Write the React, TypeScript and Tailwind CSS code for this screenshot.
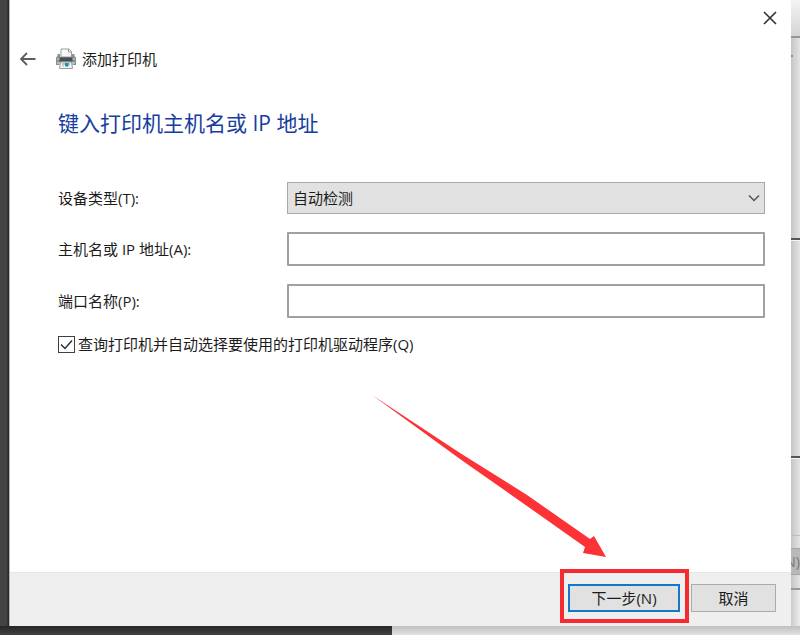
import { useState } from 'react';
import type { ReactNode } from 'react';

function PrinterIcon() {
  return (
    <svg width="22" height="22" viewBox="0 0 22 22" aria-hidden="true">
      <path d="M6 9V1h8l2.500 2.500V9z" fill="#fbfbfb" stroke="#9a9d9d" />
      <path d="M13.500 1v3h3" fill="none" stroke="#9a9d9d" />
      <path d="M2.500 6h2.500v3h12V6h2.500v2L21 9.500v7.500h-3.500v-3h-13v3H1V9.500l1.500-1.500z" fill="#8b8f90" />
      <path d="M2 10h18v2H2z" fill="#aeb2b2" />
      <path d="M4.500 9.500h13v4h-13z" fill="#4a4f51" />
      <path d="M2 14h2v2H2zM18 14h2v2h-2z" fill="#b4b8b8" />
      <path d="M5.500 14h11l1 6.500h-13z" fill="#f1f6f6" stroke="#979b9b" />
      <path d="M7 14.500h8V17H7z" fill="#a9cccf" />
      <path d="M10 15h3.500v3.500H10z" fill="#23919b" />
      <path d="M7 17h2v2H7z" fill="#c9dcdc" />
    </svg>
  );
}

function Field({ id, label, children }: { id: string; label: string; children: ReactNode }) {
  return (
    <div className="flex items-center">
      <label htmlFor={id} className="w-[229px] shrink-0">
        {label}
      </label>
      <div className="relative min-w-0 flex-1">{children}</div>
    </div>
  );
}

function WindowBehind() {
  return (
    <div
      aria-hidden="true"
      className="flex w-[9px] shrink-0 flex-col overflow-hidden bg-linear-to-r from-[#c5c5c5] to-[#e3e3e3]"
    >
      <div className="h-9 bg-linear-to-b from-[#f4f4f4] to-[#d4d4d4]" />
      <div className="h-[2px] bg-[#969696]" />
      <div className="flex h-[200px] pt-[17px]">
        <div className="h-[2px] w-[2px] bg-[#909090]" />
      </div>
      <div className="h-[3px] border-t-2 border-b border-t-[#555555] border-b-[#f4f4f4]" />
      <div className="h-[215px]" />
      <div className="h-[3px] border-t-2 border-b border-t-[#555555] border-b-[#f4f4f4]" />
      <div className="h-[76px]" />
      <div className="h-[13px] border-t border-[#bdbdbd]" />
      <div className="flex h-[27px] items-center justify-end border-y border-[#a5a5a5] bg-[#b9b9b9] text-sm text-[#777777]">
        N)
      </div>
      <div className="h-[13px]" />
      <div className="h-[2px] bg-[#999999]" />
      <div className="flex-1 bg-linear-to-r from-[#cccccc] to-[#ededed]" />
    </div>
  );
}

export default function App() {
  const [query, setQuery] = useState(true);
  const inputClass =
    'block h-[34px] w-full rounded-[1px] border-2 border-[#a0a0a0] bg-white px-1 outline-none';

  return (
    <div className="flex min-h-screen flex-col bg-[#404040] font-['Open_Sans','Noto_Sans_CJK_SC',sans-serif] text-[15px] leading-5 text-[#1c1c1c]">
      <div className="flex flex-1">
        <div className="w-[9px] shrink-0 bg-linear-to-r from-[#434343] from-70% to-[#242424]" />
        <main className="relative flex min-w-0 flex-1 flex-col border-l border-[#b5b5b5] bg-white">
          <div className="flex h-9 items-center justify-end pr-[14px]">
            <button type="button" aria-label="关闭" className="p-0">
              <svg width="14" height="14" viewBox="0 0 14 14" fill="none" stroke="#303030" strokeWidth="1.6">
                <path d="M1 1l12 12M13 1L1 13" />
              </svg>
            </button>
          </div>
          <header className="flex h-[46px] items-center pl-[10px]">
            <button type="button" aria-label="返回" className="mr-[19px]">
              <svg width="16" height="14" viewBox="0 0 16 14" fill="none" stroke="#5c5c5c" strokeWidth="1.8">
                <path d="M15.500 7H1.500M7 1L1 7l6 6" />
              </svg>
            </button>
            <PrinterIcon />
            <span className="ml-[5px]">添加打印机</span>
          </header>

          <section className="flex flex-1 flex-col pr-[26px] pl-12">
            <h1 className="mt-[27px] text-[21px] leading-7 text-[#173d9e]">键入打印机主机名或 IP 地址</h1>
            <form className="mt-[45px] flex flex-col">
              <Field id="device" label="设备类型(T):">
                <select
                  id="device"
                  className="block h-8 w-full appearance-none border border-[#a9a9a9] bg-[#e1e1e1] px-[5px] leading-5 outline-none"
                >
                  <option>自动检测</option>
                </select>
                <svg
                  className="pointer-events-none absolute top-3 right-[5px]"
                  width="12"
                  height="8"
                  viewBox="0 0 12 8"
                  fill="none"
                  stroke="#555555"
                  strokeWidth="1.5"
                >
                  <path d="M1 1.500l5 5 5-5" />
                </svg>
              </Field>
              <div className="mt-[18px] flex flex-col gap-[18px]">
                <Field id="host" label="主机名或 IP 地址(A):">
                  <input id="host" type="text" className={inputClass} />
                </Field>
                <Field id="port" label="端口名称(P):">
                  <input id="port" type="text" className={inputClass} />
                </Field>
              </div>
              <label className="mt-4 flex items-center gap-[3px]">
                <span className="grid size-[17px] shrink-0">
                  <input
                    type="checkbox"
                    checked={query}
                    onChange={(e) => setQuery(e.target.checked)}
                    className="peer col-start-1 row-start-1 size-[17px] appearance-none border border-[#404040] bg-white"
                  />
                  <svg
                    className="pointer-events-none invisible col-start-1 row-start-1 peer-checked:visible"
                    width="17"
                    height="17"
                    viewBox="0 0 17 17"
                    fill="none"
                    stroke="#303030"
                    strokeWidth="1.5"
                  >
                    <path d="M3 8.500l4 4 7-8" />
                  </svg>
                </span>
                查询打印机并自动选择要使用的打印机驱动程序(Q)
              </label>
            </form>
          </section>

          <footer className="flex justify-end gap-[11px] border-t border-[#e6e6e6] bg-[#efefef] pt-[11px] pr-[15px] pb-[14px]">
            <div className="relative">
              <button
                type="button"
                className="block h-7 w-28 border-2 border-[#1676c8] bg-[#e1e1e1] leading-5"
              >
                下一步(N)
              </button>
              <div className="pointer-events-none absolute -top-[15px] -right-[9px] -bottom-[11px] -left-2 border-4 border-[#f52b31]" />
              <svg
                className="pointer-events-none absolute right-[73px] bottom-[54px]"
                width="236"
                height="164"
                viewBox="0 0 236 164"
                aria-hidden="true"
              >
                <path
                  d="M1 1L89 59L156 101L219 145L223 142L235 163L212 159L214 153L156 112L89 65Z"
                  fill="#fc3236"
                />
              </svg>
            </div>
            <button type="button" className="h-7 w-[85px] border border-[#ababab] bg-[#e1e1e1] leading-5">
              取消
            </button>
          </footer>
        </main>
        <WindowBehind />
      </div>
      <div className="flex h-[9px]" aria-hidden="true">
        <div className="w-[49%] bg-linear-to-b from-[#272727] to-[#414141]" />
        <div className="flex-1 bg-linear-to-b from-[#bfbfbf] to-[#e2e2e2]" />
      </div>
    </div>
  );
}
